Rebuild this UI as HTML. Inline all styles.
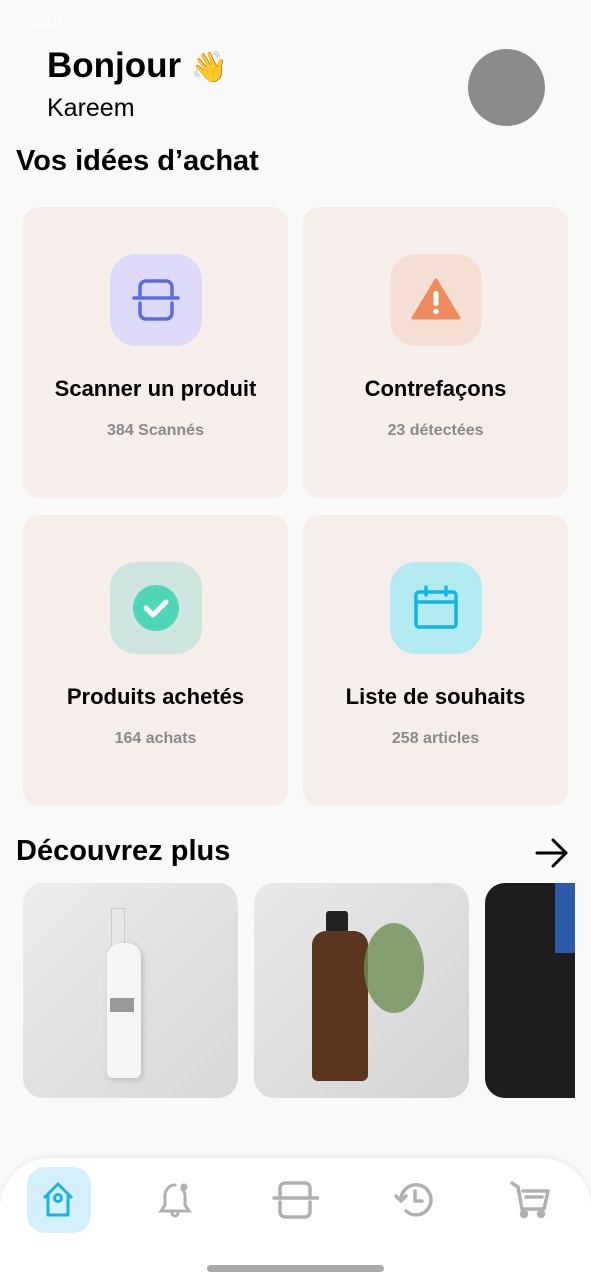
<!DOCTYPE html>
<html><head><meta charset="utf-8"><style>
*{margin:0;padding:0;box-sizing:border-box}
body{width:591px;height:1280px;background:#f9f9f9;font-family:"Liberation Sans",sans-serif;position:relative;overflow:hidden;color:#000}
.abs{position:absolute}
.card{position:absolute;width:265px;height:291px;background:#f6eeeb;border-radius:16px;text-align:center}
.ib{position:absolute;left:87px;top:47px;width:92px;height:92px;border-radius:26px;display:flex;align-items:center;justify-content:center}
.t{position:absolute;top:169px;width:100%;font-size:22px;font-weight:bold}
.s{position:absolute;top:215px;width:100%;font-size:16px;font-weight:bold;color:#8a8a8a}
.img{position:absolute;top:883px;width:215px;height:215px;border-radius:20px;overflow:hidden}
</style></head><body>
<div class="abs" style="left:28px;top:10px;color:#fff;font-size:18px">2:18</div>
<div class="abs" style="left:47px;top:46px;font-size:35px;font-weight:bold">Bonjour <span style="font-size:30px">👋</span></div>
<div class="abs" style="left:47px;top:94px;font-size:25px">Kareem</div>
<div class="abs" style="left:468px;top:49px;width:77px;height:77px;border-radius:50%;background:#8b8b8b"></div>
<div class="abs" style="left:16px;top:145px;font-size:29px;font-weight:bold">Vos idées d’achat</div>

<div class="card" style="left:23px;top:207px"><div class="ib" style="background:#dcdaf7"><svg width="48" height="42" viewBox="0 0 48 42" fill="none" stroke="#5b6ce0" stroke-width="3.5" stroke-linecap="round"><path d="M8 17V8a6 6 0 0 1 6-6h20a6 6 0 0 1 6 6v9M8 24v10a6 6 0 0 0 6 6h20a6 6 0 0 0 6-6V24M2 19h44"/></svg></div><div class="t">Scanner un produit</div><div class="s">384 Scannés</div></div>
<div class="card" style="left:303px;top:207px"><div class="ib" style="background:#f6e0d6"><svg width="50" height="44" viewBox="0 0 50 44"><path d="M25 2L48 40H2Z" fill="#ef8a5d" stroke="#ef8a5d" stroke-width="3" stroke-linejoin="round"/><rect x="22.5" y="13" width="5" height="15" rx="2.5" fill="#fff"/><circle cx="25" cy="33.5" r="2.8" fill="#fff"/></svg></div><div class="t">Contrefaçons</div><div class="s">23 détectées</div></div>
<div class="card" style="left:23px;top:515px"><div class="ib" style="background:#cfe6e0"><svg width="48" height="48" viewBox="0 0 48 48"><circle cx="24" cy="24" r="23" fill="#4fd6b6"/><path d="M14 24l7 7 13-13" fill="none" stroke="#fff" stroke-width="5" stroke-linecap="round" stroke-linejoin="round"/></svg></div><div class="t">Produits achetés</div><div class="s">164 achats</div></div>
<div class="card" style="left:303px;top:515px"><div class="ib" style="background:#b3ebf1"><svg width="46" height="46" viewBox="0 0 46 46" fill="none" stroke="#12b6e6" stroke-width="3.5" stroke-linecap="round"><rect x="3" y="7" width="40" height="35" rx="3"/><path d="M3 17h40M13 2v8M33 2v8"/></svg></div><div class="t">Liste de souhaits</div><div class="s">258 articles</div></div>

<div class="abs" style="left:16px;top:835px;font-size:29px;font-weight:bold">Découvrez plus</div>
<svg class="abs" style="left:535px;top:838px" width="34" height="30" viewBox="0 0 34 30" fill="none" stroke="#000" stroke-width="3" stroke-linecap="round" stroke-linejoin="round"><path d="M2 15h29M18 2l13 13-13 13"/></svg>

<div class="img" style="left:23px;background:linear-gradient(135deg,#ececec,#d8d8d8)"><div class="abs" style="left:88px;top:25px;width:14px;height:40px;background:#e8e8e8;border:1px solid #ccc"></div><div class="abs" style="left:84px;top:60px;width:34px;height:135px;border-radius:14px 14px 6px 6px;background:#f6f6f6;box-shadow:2px 2px 6px #bbb"></div><div class="abs" style="left:87px;top:115px;width:24px;height:14px;background:#999"></div></div>
<div class="img" style="left:254px;background:linear-gradient(135deg,#e9e9e9,#d4d4d4)"><div class="abs" style="left:72px;top:28px;width:22px;height:22px;background:#222;border-radius:3px"></div><div class="abs" style="left:58px;top:48px;width:56px;height:150px;border-radius:14px 14px 6px 6px;background:#5a3520"></div><div class="abs" style="left:110px;top:40px;width:60px;height:90px;border-radius:50%;background:#6f8f55;opacity:.8"></div></div>
<div class="img" style="left:485px;width:90px;border-radius:20px 0 0 20px;background:#1d1d1d"><div class="abs" style="left:70px;top:0;width:30px;height:70px;background:#2a5aa8"></div></div>

<div class="abs" style="left:0;top:1158px;width:591px;height:122px;background:#fff;border-radius:50px 50px 0 0;box-shadow:0 -2px 6px rgba(0,0,0,.06)"></div>
<div class="abs" style="left:27px;top:1167px;width:64px;height:66px;border-radius:18px;background:#d3f0fb"></div>
<svg class="abs" style="left:39px;top:1180px" width="40" height="40" viewBox="0 0 40 40" fill="none" stroke="#1bb3e6" stroke-width="3" stroke-linejoin="round"><path d="M5 18L19 4l14 14M9 14v21h20V14"/><circle cx="19" cy="18" r="3.5"/></svg>
<svg class="abs" style="left:156px;top:1180px" width="40" height="40" viewBox="0 0 40 40" fill="none" stroke="#b0b0b0" stroke-width="3" stroke-linecap="round"><path d="M19 5c-6 0-10 5-10 11v9l-4 6h28l-4-6v-9c0-3-1-5-3-7M16 33a3 3 0 0 0 6 0"/><circle cx="28" cy="7" r="3.5" fill="#b0b0b0" stroke="none"/></svg>
<svg class="abs" style="left:271px;top:1180px" width="48" height="40" viewBox="0 0 48 40" fill="none" stroke="#b0b0b0" stroke-width="3.5" stroke-linecap="round"><path d="M6 16V8a5 5 0 0 1 5-5h20a5 5 0 0 1 5 5v8M6 22v10a5 5 0 0 0 5 5h20a5 5 0 0 0 5-5V22M0 18h48" transform="translate(3,0)"/></svg>
<svg class="abs" style="left:393px;top:1180px" width="42" height="40" viewBox="0 0 42 40" fill="none" stroke="#b0b0b0" stroke-width="3.5" stroke-linecap="round" stroke-linejoin="round"><path d="M8 20a15 15 0 1 1 5 11"/><path d="M3 16l5 5 5-5" /><path d="M22 11v10h7"/></svg>
<svg class="abs" style="left:510px;top:1180px" width="42" height="40" viewBox="0 0 42 40" fill="none" stroke="#b0b0b0" stroke-width="3.5" stroke-linecap="round" stroke-linejoin="round"><path d="M2 3l6 4 4 22h22l4-18H13M16 17h16"/><circle cx="14" cy="34" r="2.5" fill="#b0b0b0"/><circle cx="31" cy="34" r="2.5" fill="#b0b0b0"/></svg>
<div class="abs" style="left:207px;top:1265px;width:177px;height:7px;border-radius:4px;background:#a9a9a9"></div>
</body></html>
